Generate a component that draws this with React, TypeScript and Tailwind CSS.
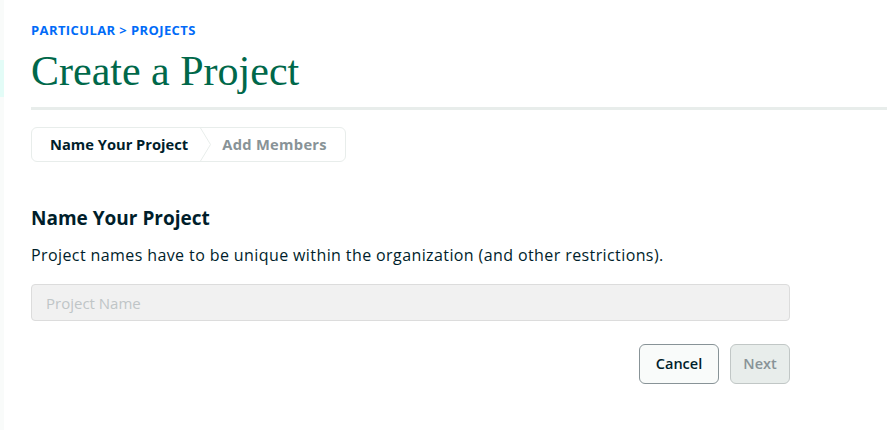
export default function App() {
  return (
    <div className="flex min-h-[430px] bg-white" style={{ fontFamily: '"Open Sans", Lato, sans-serif' }}>
      <div className="w-[4px] shrink-0 bg-[#f9fbfa] flex flex-col">
        <div className="h-[60px]" />
        <div className="h-[37px] bg-[#e3fcf7]" />
      </div>
      <div className="flex-1 pl-[27px] pt-[21px]">
        <div className="text-[13px] font-bold uppercase text-[#016bf8] tracking-[0.4px] leading-[18px]">
          Particular &gt; Projects
        </div>
        <h1
          className="mt-[9px] text-[42px] leading-[46px] text-[#00684a]"
          style={{ fontFamily: '"Liberation Serif", serif' }}
        >
          Create a Project
        </h1>
        <div className="mt-[13px] h-[3px] bg-[#e8edeb]" />

        <div className="w-[759px]">
          <div className="mt-[17px] inline-flex h-[35px] items-stretch rounded-[6px] border border-[#e8edeb] text-[14.7px] font-bold">
            <div className="relative flex items-center pl-[18px] pr-[12px] text-[#001e2b]">
              Name Your Project
            </div>
            <svg width="12" height="33" viewBox="0 0 12 33" className="shrink-0">
              <path d="M0.5 0 L10.5 16.5 L0.5 33" fill="none" stroke="#e8edeb" strokeWidth="1" />
            </svg>
            <div className="flex items-center pl-[10px] pr-[18px] text-[#889397] tracking-[0.3px]">Add Members</div>
          </div>

          <h2 className="mt-[44px] text-[19px] font-bold leading-[24px] text-[#001e2b]">Name Your Project</h2>
          <p className="mt-[13px] text-[16px] leading-[24px] tracking-[0.4px] text-[#001e2b]">
            Project names have to be unique within the organization (and other restrictions).
          </p>

          <input
            placeholder="Project Name"
            className="mt-[17px] block h-[37px] w-full rounded-[4px] border border-[#dcdcdc] bg-[#f1f1f1] px-[14px] text-[15px] text-[#001e2b] outline-none placeholder:text-[#bfc5c7]"
          />

          <div className="mt-[23px] flex justify-end gap-[11px]">
            <button className="h-[40px] w-[80px] rounded-[6px] border border-[#889397] bg-[#f9fbfa] text-[14.5px] font-semibold text-[#001e2b]">
              Cancel
            </button>
            <button className="h-[40px] w-[60px] rounded-[6px] border border-[#c1c7c6] bg-[#e8edeb] text-[14.5px] font-semibold text-[#889397]">
              Next
            </button>
          </div>
        </div>
      </div>
    </div>
  );
}
